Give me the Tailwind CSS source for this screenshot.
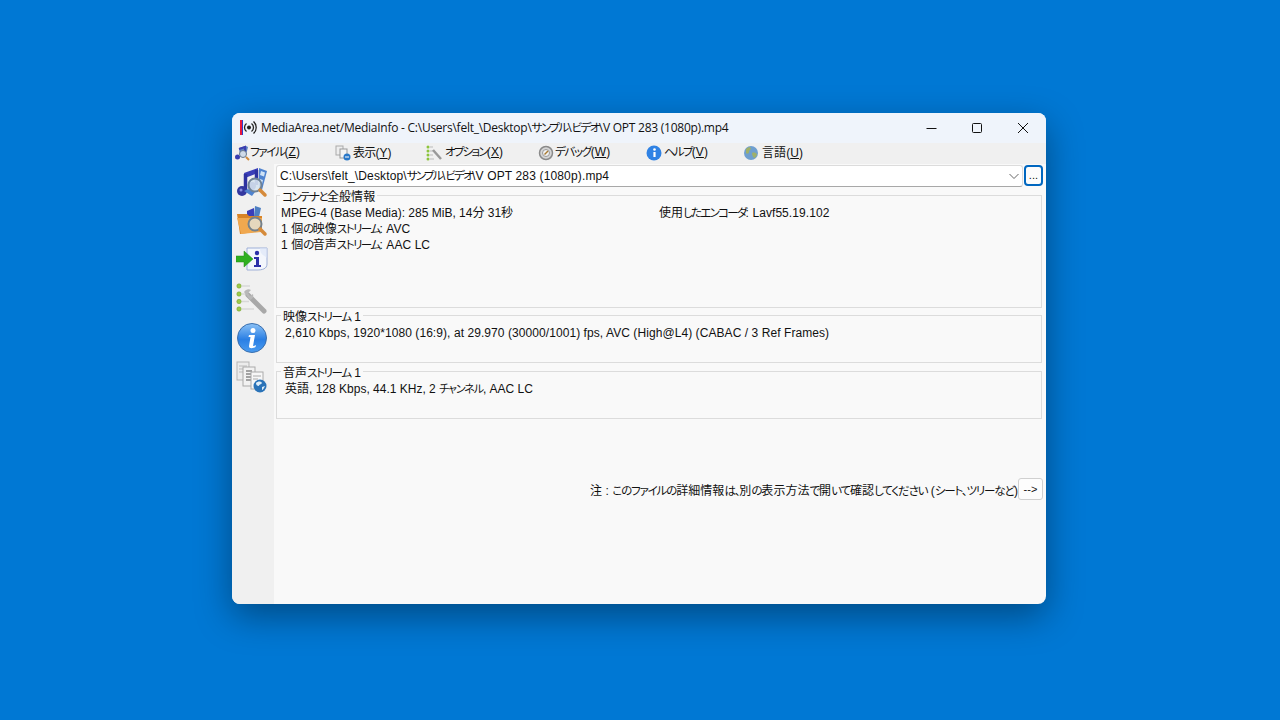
<!DOCTYPE html>
<html lang="ja"><head><meta charset="utf-8"><script src="https://cdn.jsdelivr.net/npm/@tailwindcss/browser@4"></script></head>
<body class="m-0">
<div class="w-[1280px] h-[720px] bg-[#0078d4] overflow-hidden pt-[113px] pl-[232px]">
<div class="w-[814px] h-[491px] rounded-[8px] overflow-hidden flex flex-col bg-[#f9f9f9] shadow-[0_12px_36px_rgba(0,0,0,0.38)] text-[12px] text-[#111] tracking-[0.07px] [font-feature-settings:'palt'] font-['Liberation_Sans','Noto_Sans_CJK_JP',sans-serif]">
  <!-- title bar -->
  <div class="h-[30px] shrink-0 bg-[#eff4fb] flex items-center pl-[7px]">
    <svg class="w-[18px] h-[18px]" viewBox="0 0 18 18"><rect x="1" y="1" width="2" height="15" fill="#e8173c"/><rect x="3" y="1" width="1" height="15" fill="#2b3fd0"/><circle cx="10" cy="8.500" r="2" fill="#222"/><path d="M7.500 4.500a5 5 0 0 0 0 8M12.500 4.500a5 5 0 0 1 0 8M14.500 2.500a8 8 0 0 1 0 12" fill="none" stroke="#222" stroke-width="1.300"/></svg>
    <span class="ml-[4px] font-['Open_Sans','Noto_Sans_CJK_JP',sans-serif] text-[12px] whitespace-nowrap tracking-[-0.25px]">MediaArea.net/MediaInfo - C:\Users\felt_\Desktop\<span class="text-[11.5px] tracking-[-1.55px]">サンプル</span>\<span class="text-[11.5px] tracking-[-1.55px]">ビデオ</span>\V OPT 283 (1080p).mp4</span>
    <div class="ml-auto flex h-full">
      <div class="w-[46px] flex items-center justify-center"><svg class="w-[12px] h-[12px]" viewBox="0 0 12 12"><path d="M1.500 6.500h10" stroke="#111" stroke-width="1"/></svg></div>
      <div class="w-[46px] flex items-center justify-center"><svg class="w-[12px] h-[12px]" viewBox="0 0 12 12"><rect x="1.500" y="1.500" width="9" height="9" rx="1" fill="none" stroke="#111" stroke-width="1"/></svg></div>
      <div class="w-[46px] flex items-center justify-center"><svg class="w-[12px] h-[12px]" viewBox="0 0 12 12"><path d="M1 1l10 10M11 1L1 11" stroke="#111" stroke-width="1"/></svg></div>
    </div>
  </div>
  <!-- menu -->
  <div class="h-[21px] shrink-0 bg-[#f0f0f0] flex items-center pl-[2px] pb-[2px] text-[12px]">
    <div class="w-[101px] flex items-center gap-[0px]">
      <svg class="w-[16px] h-[16px] shrink-0" viewBox="0 0 16 16"><path d="M5 3l7-2 2 1-2 8-6 1z" fill="#5c7fc0"/><path d="M5 4l6-2v8" fill="none" stroke="#3b3fb0" stroke-width="2"/><circle cx="3.500" cy="12" r="2.500" fill="#3b3fb0"/><circle cx="9" cy="9" r="3.500" fill="#cfdbe8" stroke="#66788c"/><path d="M12 12l3 3" stroke="#d08a3a" stroke-width="2"/></svg>
      <span><span class="text-[11.5px] tracking-[-1.35px]">ファイル</span>(<u>Z</u>)</span></div>
    <div class="w-[91px] flex items-center gap-[2px]">
      <svg class="w-[16px] h-[16px] shrink-0" viewBox="0 0 16 16"><rect x="1" y="1" width="7" height="9" fill="#eee" stroke="#aaa"/><rect x="5" y="4" width="7" height="9" fill="#f4f4f4" stroke="#999"/><circle cx="12" cy="12" r="3.500" fill="#2a78c8"/><path d="M10 12h4" stroke="#fff"/></svg>
      <span><span class="tracking-[-0.8px]">表示</span>(<u>Y</u>)</span></div>
    <div class="w-[112px] flex items-center gap-[3px]">
      <svg class="w-[16px] h-[16px] shrink-0" viewBox="0 0 16 16"><g fill="#8cc43c"><circle cx="2" cy="2" r="1.500"/><circle cx="2" cy="6" r="1.500"/><circle cx="2" cy="10" r="1.500"/><circle cx="2" cy="14" r="1.500"/></g><path d="M4 2h3M4 6h3M4 10h3M4 14h4" stroke="#bbb"/><path d="M7 5l8 9" stroke="#999" stroke-width="2.500"/></svg>
      <span><span class="text-[11.5px] tracking-[-1.75px]">オプション</span>(<u>X</u>)</span></div>
    <div class="w-[108px] flex items-center gap-[1px]">
      <svg class="w-[16px] h-[16px] shrink-0" viewBox="0 0 16 16"><circle cx="8" cy="8" r="6.500" fill="#d5d5d5" stroke="#8a8a8a" stroke-width="1.500"/><circle cx="8" cy="8" r="3.500" fill="#f2f2f2" stroke="#999"/><path d="M6.500 9.500L10 6" stroke="#a8792e" stroke-width="1.500"/></svg>
      <span><span class="text-[11.5px] tracking-[-1.35px]">デバッグ</span>(<u>W</u>)</span></div>
    <div class="w-[97px] flex items-center gap-[2px]">
      <svg class="w-[16px] h-[16px] shrink-0" viewBox="0 0 16 16"><circle cx="8" cy="8" r="7.500" fill="#2f82e4"/><circle cx="8.500" cy="4.500" r="1.300" fill="#fff"/><path d="M8.500 7v5" stroke="#fff" stroke-width="2.200"/></svg>
      <span><span class="text-[11.5px] tracking-[-1.75px]">ヘルプ</span>(<u>V</u>)</span></div>
    <div class="flex items-center gap-[3px]">
      <svg class="w-[16px] h-[16px] shrink-0" viewBox="0 0 16 16"><circle cx="8" cy="8" r="7" fill="#6f9fcf"/><path d="M3 4c2-2 4-2 5-1 0 2-2 2-2 4s-2 2-3 1zM9 8c2-1 4 0 5 1-1 3-2 4-3 4-1-1-2-3-2-5z" fill="#9fb06a"/></svg>
      <span>言語(<u>U</u>)</span></div>
  </div>
  <div class="flex-1 flex min-h-0">
    <!-- toolbar -->
    <div class="w-[42px] shrink-0 bg-[#f0f0f0] flex flex-col items-center pt-[2px] gap-[7px] pr-[2px]">
      <svg class="w-[32px] h-[32px]" viewBox="0 0 32 32"><path d="M8 7l14-5v5L9 12z" fill="#3a3eb8"/><path d="M9.500 8v17M20.500 4v15" stroke="#2d31a0" stroke-width="3.500"/><circle cx="6" cy="25" r="5" fill="#33379f"/><circle cx="5" cy="24" r="1.500" fill="#8a8ee0"/><circle cx="16" cy="20" r="4" fill="#33379f"/><path d="M23 2l8 3-5 19-3-1z" fill="#4f83cf"/><path d="M25 5l4 1.500-1 4-4-1.500zM24 13l3 1-1 4-3-1z" fill="#cfe2f5"/><path d="M8 25l8 5 3-4-7-3z" fill="#4f83cf"/><circle cx="19" cy="19" r="6.500" fill="#d6e3ee" fill-opacity=".9" stroke="#6f8296" stroke-width="2"/><path d="M24 24l5 5" stroke="#d58a3a" stroke-width="3.500" stroke-linecap="round"/></svg>
      <svg class="w-[32px] h-[32px]" viewBox="0 0 32 32"><path d="M11 6l7-3v10h-7z" fill="#3a3eb8"/><path d="M19 1l6 2-2 9-5-1z" fill="#4d7fc2"/><path d="M1 9h10l2 2h13v15l-22 3z" fill="#d98426"/><path d="M1 13h25l-1 14-20 2z" fill="#f0a84f"/><circle cx="19" cy="19" r="6.500" fill="#e3dcc9" fill-opacity=".9" stroke="#75808a" stroke-width="2"/><path d="M24 24l5 5" stroke="#d58a3a" stroke-width="3.500" stroke-linecap="round"/></svg>
      <svg class="w-[32px] h-[32px]" viewBox="0 0 32 32"><path d="M11 4h20v16c0 5-5 6-10 6h-10z" fill="#f3f6fc" stroke="#9fb0d8"/><path d="M24 4h7v10c-3-3-7-3-7-10z" fill="#dbe5f6" fill-opacity=".6"/><circle cx="21" cy="9" r="2.200" fill="#2b2fa8"/><path d="M18 13h5v8h2v2h-7v-2h2v-6h-2z" fill="#2b2fa8"/><path d="M0 12h8V7l9 8-9 8v-5H0z" fill="#30b020" stroke="#1f8a14" stroke-width=".5"/></svg>
      <svg class="w-[32px] h-[32px]" viewBox="0 0 32 32"><g fill="#9ccb4a" stroke="#6f9a2c" stroke-width=".5"><circle cx="3" cy="3" r="2.200"/><circle cx="3" cy="11" r="2.200"/><circle cx="3" cy="18.500" r="2.200"/><circle cx="3" cy="26" r="2.200"/></g><path d="M6 3h8M6 11h6M6 18.500h7M6 26h12" stroke="#d8d8d8" stroke-width="1.500"/><path d="M12 12l16 16" stroke="#a8a8a8" stroke-width="5" stroke-linecap="round"/><path d="M8 9a5 5 0 0 1 7-2l-3 3 2 3 3-2a5 5 0 0 1-3 6z" fill="#b8b8b8"/></svg>
      <svg class="w-[32px] h-[32px]" viewBox="0 0 32 32"><defs><linearGradient id="g1" x1="0" y1="0" x2="0" y2="1"><stop offset="0" stop-color="#8cc2f6"/><stop offset=".55" stop-color="#2a7fe4"/><stop offset="1" stop-color="#4a9cf0"/></linearGradient></defs><circle cx="16" cy="16" r="14.500" fill="url(#g1)" stroke="#3a6fae"/><circle cx="17" cy="8.500" r="2.500" fill="#fff"/><path d="M13 13h6l-2 11c1 0 2-.5 3-1l-.5 2c-2 1.500-7 2-6.500-1l1.500-9h-2z" fill="#fff"/></svg>
      <svg class="w-[32px] h-[32px]" viewBox="0 0 32 32"><rect x="1" y="1" width="12" height="18" fill="#ececec" stroke="#b5b5b5"/><path d="M3 5h8M3 8h8M3 11h8" stroke="#bbb"/><rect x="7" y="6" width="12" height="19" fill="#f2f2f2" stroke="#aaa"/><path d="M10 10h6M10 13h6M10 16h6M10 19h6" stroke="#888" stroke-width="1.300"/><rect x="15" y="11" width="12" height="17" fill="#f7f7f7" stroke="#aaa"/><path d="M17 15h8M17 18h5" stroke="#aaa"/><circle cx="24" cy="25" r="6.500" fill="#2a73b8"/><path d="M20 22c2-2 5-2 6 0-1 2-3 1-3 3-2 0-3-1-3-3zM26 26l3-1c-1 2-2 4-3 4z" fill="#e0eef8"/></svg>
    </div>
    <!-- main -->
    <div class="flex-1 min-w-0 pl-[2px] pr-[3px] pt-[1px] flex flex-col">
      <div class="flex h-[22px] shrink-0">
        <div class="flex-1 h-[22px] bg-white border border-[#dcdcdc] border-b-[#a8a8a8] rounded-[3px] flex items-center pl-[3px] pr-[2px] whitespace-nowrap">
          <span class="tracking-[0.15px]">C:\Users\felt_\Desktop\<span class="text-[11.5px] tracking-[-1.75px]">サンプル</span>\<span class="text-[11.5px] tracking-[-1.75px]">ビデオ</span>\V OPT 283 (1080p).mp4</span>
          <svg class="ml-auto w-[12px] h-[12px]" viewBox="0 0 12 12"><path d="M1.500 4l4.500 4.500L10.500 4" fill="none" stroke="#666" stroke-width="1"/></svg>
        </div>
        <div class="w-[19px] h-[21px] ml-[1px] bg-[#fcfcfc] border-2 border-[#0067c0] rounded-[4px] flex items-center justify-center text-[11px] leading-none">...</div>
      </div>
      <!-- groups -->
      <div class="relative mt-[8px] mr-[1px] h-[113px] border border-[#dcdcdc] shrink-0 pl-[4px] pt-[9px] leading-[16px]">
        <span class="absolute left-[3px] top-[-6px] bg-[#f9f9f9] px-[2px] leading-[14px]"><span class="text-[11.5px] tracking-[-1.55px]">コンテナと</span>全般情報</span>
        <div class="flex"><span class="w-[378px] shrink-0 tracking-normal">MPEG-4 (Base Media): 285 MiB, 14分 31秒</span><span>使用<span class="text-[11.5px] tracking-[-1.75px]">したエンコーダ</span>: Lavf55.19.102</span></div>
        <div>1 個<span class="text-[11.5px] tracking-[-1.55px]">の</span>映像<span class="text-[11.5px] tracking-[-1.55px]">ストリーム</span>: AVC</div>
        <div>1 個<span class="text-[11.5px] tracking-[-1.55px]">の</span>音声<span class="text-[11.5px] tracking-[-1.55px]">ストリーム</span>: AAC LC</div>
      </div>
      <div class="relative mt-[7px] mr-[1px] h-[48px] border border-[#dcdcdc] shrink-0 pl-[8px] pt-[9px] leading-[16px]">
        <span class="absolute left-[4px] top-[-6px] bg-[#f9f9f9] px-[2px] leading-[14px]">映像<span class="text-[11.5px] tracking-[-1.35px]">ストリーム</span> 1</span>
        <div>2,610 Kbps, 1920*1080 (16:9), at 29.970 (30000/1001) fps, AVC (High@L4) (CABAC / 3 Ref Frames)</div>
      </div>
      <div class="relative mt-[8px] mr-[1px] h-[48px] border border-[#dcdcdc] shrink-0 pl-[8px] pt-[9px] leading-[16px]">
        <span class="absolute left-[4px] top-[-6px] bg-[#f9f9f9] px-[2px] leading-[14px]">音声<span class="text-[11.5px] tracking-[-1.35px]">ストリーム</span> 1</span>
        <div class="tracking-normal">英語, 128 Kbps, 44.1 KHz, 2 <span class="text-[11px] tracking-[-1.1px]">チャンネル</span>, AAC LC</div>
      </div>
      <div class="mt-[59px] flex items-center justify-end">
        <span class="whitespace-nowrap pt-[4px]">注 : <span class="text-[11.5px] tracking-[-1.17px]">このファイルの</span>詳細情報<span class="text-[11.5px] tracking-[-1.17px]">は、</span>別<span class="text-[11.5px] tracking-[-1.17px]">の</span>表示方法<span class="text-[11.5px] tracking-[-1.17px]">で</span>開<span class="text-[11.5px] tracking-[-1.17px]">いて</span>確認<span class="text-[11.5px] tracking-[-1.17px]">してください</span> (<span class="text-[11.5px] tracking-[-1.17px]">シート、ツリーなど</span>)</span>
        <div class="w-[25px] h-[22px] bg-[#fdfdfd] border border-[#d0d0d0] rounded-[3px] flex items-center justify-center text-[11px] leading-none">--&gt;</div>
      </div>
    </div>
  </div>
</div>
</div>
</body></html>
